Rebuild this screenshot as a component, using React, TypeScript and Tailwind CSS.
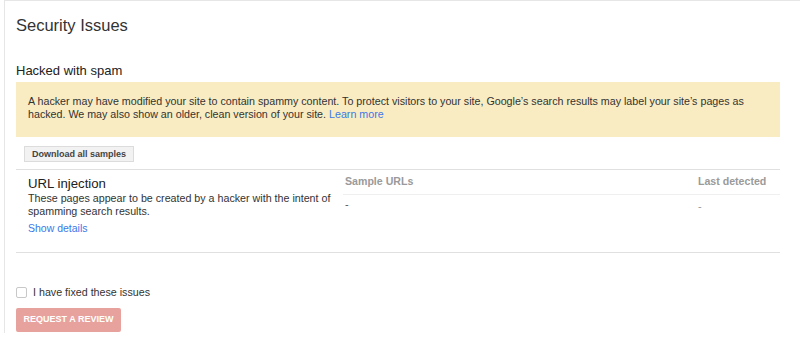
const font = { fontFamily: '"Liberation Sans", Arial, sans-serif' };

const SecurityIssues = () => {
  return (
    <div className="w-[800px] h-[345px] bg-white overflow-hidden" style={font}>
      <div className="ml-1 h-[333px] border-l border-t border-[#e6e6e6] pl-[11px] pr-5">
        <h1 className="pt-3 text-[16.5px] leading-6 text-[#333]">Security Issues</h1>

        <h2 className="mt-[26px] text-[13px] leading-4 text-[#222]">Hacked with spam</h2>

        <div className="mt-[3px] h-[55px] bg-[#f9ecc2] px-3 pt-[13px] text-[10.7px] leading-[12.5px] text-[#333]">
          <p>
            A hacker may have modified your site to contain spammy content. To protect visitors to your site,
            Google’s search results may label your site’s pages as
          </p>
          <p>
            <span>hacked. We may also show an older, clean version of your site. </span>
            <a className="text-[#3b78e7]">Learn more</a>
          </p>
        </div>

        <button className="mt-[9px] ml-2 block h-[16px] border border-[#dcdcdc] bg-[#f2f2f2] px-[7px] text-[9px] font-bold leading-[14px] text-[#444]">
          Download all samples
        </button>

        <div className="mt-[7px] flex h-[84px] border-y border-[#e0e0e0]">
          <div className="w-[327px] pl-3 pt-[6px]">
            <div className="text-[13.2px] leading-4 text-[#222]">URL injection</div>
            <p className="w-[310px] text-[10.7px] leading-[12.5px] text-[#333]">
              These pages appear to be created by a hacker with the intent of spamming search results.
            </p>
            <a className="mt-[3px] block text-[10.5px] leading-4 text-[#3b78e7]">Show details</a>
          </div>
          <div className="flex flex-1 flex-col">
            <div className="flex h-[25px] items-end border-b border-[#efefef] pb-[4px] text-[10.6px] font-bold text-[#9a9a9a]">
              <div className="flex-1 pl-[2px]">Sample URLs</div>
              <div className="w-[82px]">Last detected</div>
            </div>
            <div className="flex pt-[1px] text-[11px] leading-4 text-[#555]">
              <div className="flex-1 pl-[2px]">-</div>
              <div className="w-[82px] pt-[2px] text-[#999]">-</div>
            </div>
          </div>
        </div>

        <label className="mt-[31px] flex items-center gap-[6px] text-[10.7px] leading-4 text-[#333]">
          <span className="h-[11px] w-[11px] rounded-[2px] border border-[#c8c8c8] bg-white" />
          I have fixed these issues
        </label>

        <button className="mt-[8px] block h-6 w-[105px] rounded-[2px] bg-[#e8a29d] text-[9px] font-bold text-white">
          REQUEST A REVIEW
        </button>
      </div>
    </div>
  );
};

export default function App() {
  return <SecurityIssues />;
}
